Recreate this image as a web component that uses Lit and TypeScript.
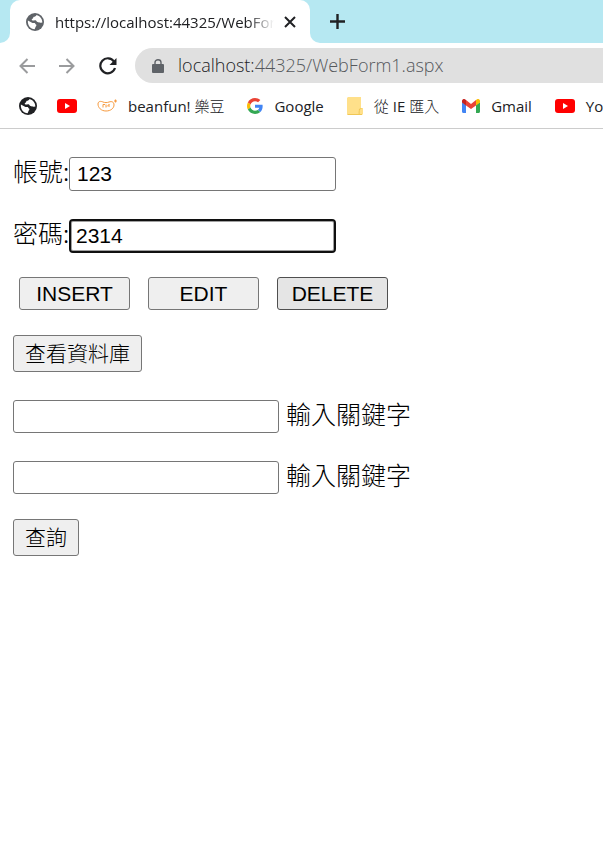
import { LitElement, html, css, svg } from "lit";
import { customElement } from "lit/decorators.js";

const globe = svg`<circle cx="12" cy="12" r="12" fill="currentColor"/><path fill="#fff" d="M2.500 10 8 13c1 .6 2.200 0 3.500.4 1 .4.8 1.600 1.800 2 .9.400.700 1.800-.3 2.500l-1.500 3.600C6 21.500 2 17 2.500 10zM14 2.500c-.5 1.700-2 2.200-3.500 2.500-1 .4-.5 1.700-1.500 2.200-1.200.6-2 1.800-.800 2.600 1.500.7 3-.5 4.600 0 1.500.5 1.200 2 2.700 2.300 1.500.2 2.500 1.200 4.500.9l1.800-.5C21.800 7.500 18.500 3.500 14 2.500z"/>`;

const icons = {
  globe: html`<svg viewBox="0 0 24 24" width="18" height="18">${globe}</svg>`,
  youtube: html`<svg viewBox="0 0 20 14" width="20" height="14"><rect width="20" height="14" rx="3" fill="#f00"/><path d="M8 4v6l5-3z" fill="#fff"/></svg>`,
  beanfun: html`<svg viewBox="0 0 20 14" width="20" height="14" fill="none" stroke="#f79a3e"><path d="M1 5c0-3 3-3 5-2 2 .8 4 .8 6 0 3-1 5 0 5 3 0 3-3 6-8 6S1 8.500 1 5z"/><path d="M6 5.500v3M6 5.500h2M9 5.500v3M12 5v3M12 5.500l-2 2" stroke-width="1"/><path d="M17 2h3M18.500.5v3" stroke-width="1.200"/></svg>`,
  google: html`<svg viewBox="0 0 48 48" width="16" height="16"><path fill="#EA4335" d="M24 9.500c3.540 0 6.710 1.220 9.210 3.600l6.850-6.850C35.900 2.380 30.470 0 24 0 14.620 0 6.510 5.380 2.560 13.220l7.980 6.190C12.430 13.720 17.740 9.500 24 9.500z"/><path fill="#4285F4" d="M46.980 24.550c0-1.570-.15-3.090-.38-4.550H24v9.020h12.940c-.58 2.960-2.260 5.480-4.780 7.180l7.730 6c4.510-4.180 7.090-10.360 7.090-17.650z"/><path fill="#FBBC05" d="M10.530 28.590c-.48-1.450-.76-2.990-.76-4.590s.27-3.140.76-4.590l-7.980-6.190C.92 16.460 0 20.120 0 24c0 3.880.92 7.540 2.560 10.780l7.970-6.190z"/><path fill="#34A853" d="M24 48c6.480 0 11.930-2.130 15.890-5.810l-7.730-6c-2.150 1.450-4.920 2.300-8.160 2.300-6.260 0-11.570-4.220-13.470-9.910l-7.980 6.190C6.510 42.620 14.620 48 24 48z"/></svg>`,
  folder: html`<svg viewBox="0 0 16 18" width="16" height="18"><path fill="#ffe08a" d="M1 0h13v11h2v6l-1 1H1l-1-1V1z"/><path d="M12.500 17.500c-1-2 0-3 0-5.500l2-.5M.5 17.500h14.500" fill="none" stroke="#f0c755"/></svg>`,
  gmail: html`<svg viewBox="0 0 18 14" width="18" height="14"><path fill="#4285f4" d="M0 3v9.500C0 13.300.6 14 1.400 14H4V6z"/><path fill="#34a853" d="M18 3v9.500c0 .8-.6 1.500-1.400 1.500H14V6z"/><path fill="#ea4335" d="M4 1l5 4 5-4v5.500L9 10 4 6.500z"/><path fill="#c5221f" d="M0 2C0 .2 2-.6 3.300.4L4 1v5.500L0 3.500z"/><path fill="#fbbc04" d="M18 2c0-1.800-2-2.600-3.300-1.600L14 1v5.500l4-3z"/></svg>`,
};

@customElement("browser-chrome")
class BrowserChrome extends LitElement {
  static styles = css`
    :host { display: block; overflow: hidden; font-family: "Open Sans", "Noto Sans CJK TC", sans-serif; color: #202124; border-bottom: 1px solid #ccc; }
    svg { display: block; flex: none; }
    button { border: 0; padding: 0; background: none; color: inherit; display: flex; }
    .strip { display: flex; height: 43px; }
    .before { width: 10px; background: #b6e8f2; border-bottom-right-radius: 10px; }
    .slot { width: 300px; background: linear-gradient(#b6e8f2 50%, #fff 50%); }
    .tab { height: 100%; box-sizing: border-box; display: flex; align-items: center; background: #fff; border-radius: 10px 10px 0 0; padding: 0 14px 0 16px; }
    .favicon { color: #5f6368; }
    .title { flex: 1; margin: 0 10px 0 11px; overflow: hidden; white-space: nowrap; font-size: 15px; line-height: 24px; mask-image: linear-gradient(90deg, #000 88%, transparent); }
    .after { flex: 1; background: #b6e8f2; border-bottom-left-radius: 10px; display: flex; align-items: center; padding-left: 20px; }
    .toolbar { display: flex; align-items: center; height: 45px; padding-left: 19px; gap: 18px; }
    .controls { display: flex; align-items: center; gap: 24px; }
    .dim { color: #9a9b9d; }
    .address { flex: 1; min-width: 0; display: flex; align-items: center; gap: 14px; height: 35px; padding-left: 17px; background: #e0e0e0; border-radius: 18px 0 0 18px; font-size: 18px; line-height: 24px; font-weight: 340; white-space: nowrap; }
    .url { padding-bottom: 2px; }
    .path { color: #55585c; }
    .marks { display: flex; align-items: center; height: 36px; padding: 0 0 4px 19px; }
    .mark { display: flex; align-items: center; gap: 11px; margin-right: 23px; color: inherit; text-decoration: none; font-size: 15px; line-height: 24px; white-space: nowrap; }
    .bare { margin-right: 20px; }
    .han { font-weight: 300; }
  `;
  label(text: string) {
    return text.split(/([\u4e00-\u9fff]+)/).map((part, i) => (i % 2 ? html`<span class="han">${part}</span>` : part));
  }
  render() {
    const marks = [
      [icons.globe, ""], [icons.youtube, ""], [icons.beanfun, "beanfun! 樂豆"], [icons.google, "Google"],
      [icons.folder, "從 IE 匯入"], [icons.gmail, "Gmail"], [icons.youtube, "YouTube"],
    ] as const;
    return html`
      <div class="strip">
        <div class="before"></div>
        <div class="slot"><div class="tab">
          <span class="favicon">${icons.globe}</span>
          <span class="title">https://localhost:44325/WebForm1.aspx</span>
          <button aria-label="Close tab"><svg width="12" height="12" viewBox="0 0 12 12"><path d="M1 1l10 10M11 1L1 11" stroke="currentColor" stroke-width="2"/></svg></button>
        </div></div>
        <div class="after"><button aria-label="New tab"><svg width="15" height="15" viewBox="0 0 15 15"><path d="M7.500 0v15M0 7.500h15" stroke="currentColor" stroke-width="2.400"/></svg></button></div>
      </div>
      <div class="toolbar">
        <div class="controls">
          <button class="dim" aria-label="Back"><svg width="16" height="16" viewBox="0 0 16 16" fill="none" stroke="currentColor" stroke-width="2"><path d="M16 8H2M8.500 1L1.500 8l7 7"/></svg></button>
          <button class="dim" aria-label="Forward"><svg width="16" height="16" viewBox="0 0 16 16" fill="none" stroke="currentColor" stroke-width="2"><path d="M0 8h14M7.500 1l7 7-7 7"/></svg></button>
          <button aria-label="Reload"><svg width="18" height="18" viewBox="0 0 18 18"><path d="M15 4.500A7.500 7.500 0 1 0 16 11" fill="none" stroke="currentColor" stroke-width="2.200"/><path d="M17.500 1v7h-7z" fill="currentColor"/></svg></button>
        </div>
        <div class="address">
          <svg width="12" height="14" viewBox="0 0 12 14"><rect x="0" y="5" width="12" height="9" rx="1" fill="#5f6368"/><path d="M3 6V3.500a3 2.700 0 0 1 6 0V6" fill="none" stroke="#5f6368" stroke-width="1.400"/></svg>
          <span class="url">localhost:<span class="path">44325/WebForm1.aspx</span></span>
        </div>
      </div>
      <nav class="marks">${marks.map(([icon, text]) => html`<a class="mark ${text ? "" : "bare"}" href="#" aria-label=${text || "Bookmark"}>${icon}${text ? html`<span>${this.label(text)}</span>` : ""}</a>`)}</nav>
    `;
  }
}

@customElement("app-root")
export class AppRoot extends LitElement {
  static styles = css`
    :host { display: block; min-height: 100vh; background: #fff; }
    form { padding: 0 13px; color: #000; font-family: "Noto Sans CJK TC", sans-serif; font-weight: 300; }
    .row { display: flex; margin-top: 28px; height: 34px; align-items: center; font-size: 25px; line-height: 26px; white-space: nowrap; }
    .search { height: 33px; }
    .caption { width: 56px; padding-bottom: 8px; }
    .hint { margin-left: 7px; padding-bottom: 8px; }
    input { box-sizing: border-box; width: 267px; height: 100%; margin: 0; padding: 0 7px; border: 1px solid #767676; border-radius: 3px; background: #fff; color: #000; font: 21px "Liberation Sans", sans-serif; outline: 0; }
    .active { border: 2px solid #101010; padding: 0 5px; box-shadow: inset 0 0 0 1px #a0a0a0; border-radius: 4px; }
    .keyword { width: 266px; }
    .actions { display: flex; gap: 18px; margin: 24px 0 0 6px; }
    button { box-sizing: border-box; border: 1px solid #767676; border-radius: 3px; background: #efefef; color: #000; padding: 0; }
    .action { width: 111px; height: 33px; font: 21px "Liberation Sans", sans-serif; }
    .pressed { background: #e5e5e5; border-color: #4f4f4f; }
    .command { display: block; height: 37px; margin-top: 25px; padding: 0 11px 4px; font: 300 21px "Noto Sans CJK TC", sans-serif; }
  `;
  render() {
    return html`
      <browser-chrome></browser-chrome>
      <form @submit=${(e: Event) => e.preventDefault()}>
        <div class="row"><label class="caption" for="account">帳號:</label><input id="account" value="123"></div>
        <div class="row"><label class="caption" for="password">密碼:</label><input class="active" id="password" value="2314"></div>
        <div class="actions">
          <button class="action">INSERT</button><button class="action">EDIT</button><button class="action pressed">DELETE</button>
        </div>
        <button class="command">查看資料庫</button>
        <div class="row search"><input class="keyword" id="first"><label class="hint" for="first">輸入關鍵字</label></div>
        <div class="row search"><input class="keyword" id="second"><label class="hint" for="second">輸入關鍵字</label></div>
        <button class="command">查詢</button>
      </form>
    `;
  }
}
